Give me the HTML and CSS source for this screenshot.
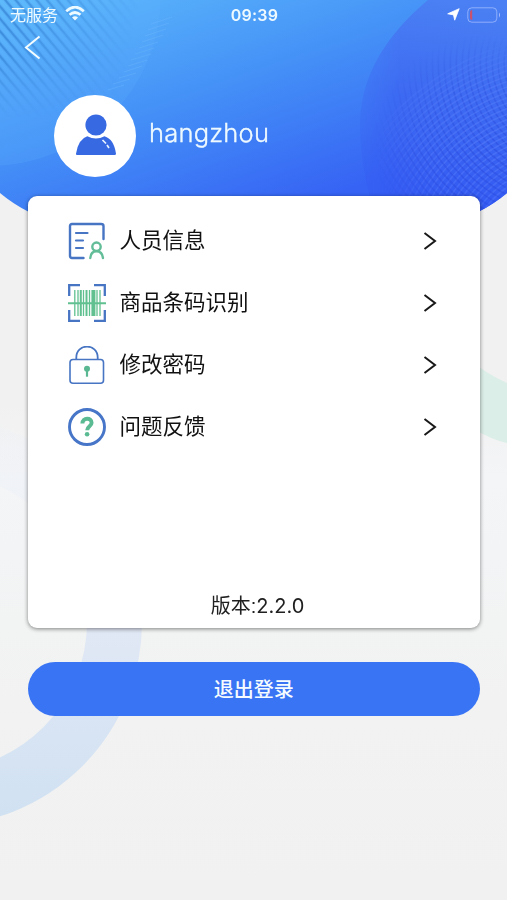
FILE: index.html
```html
<!DOCTYPE html>
<html lang="zh-CN">
<head>
<meta charset="utf-8">
<meta name="viewport" content="width=device-width">
<title>个人中心</title>
<link rel="stylesheet" href="styles.css">
</head>
<body>
<main class="screen">
<svg class="backdrop" viewBox="0 0 507 900" aria-hidden="true">
  <defs>
    <linearGradient id="sky" gradientUnits="userSpaceOnUse" x1="150" y1="-50" x2="250" y2="240">
      <stop offset="0" stop-color="#5ebbfb"/><stop offset=".5" stop-color="#4490f7"/><stop offset=".95" stop-color="#3663f4"/>
    </linearGradient>
    <linearGradient id="orb" gradientUnits="userSpaceOnUse" x1="430" y1="0" x2="410" y2="200">
      <stop offset="0" stop-color="#4a80f3"/><stop offset=".45" stop-color="#3e6bf2"/><stop offset="1" stop-color="#345af2"/>
    </linearGradient>
    <linearGradient id="ring" gradientUnits="userSpaceOnUse" x1="0" y1="430" x2="0" y2="820">
      <stop offset="0" stop-color="#e8eef7" stop-opacity=".15"/><stop offset=".2" stop-color="#e8eef7" stop-opacity=".4"/><stop offset=".5" stop-color="#e1e8f5"/><stop offset="1" stop-color="#d0e1f2"/>
    </linearGradient>
    <clipPath id="dome"><path d="M0 0H507V193Q494 204 478 212H29Q13 204 0 193Z"/></clipPath>
    <clipPath id="corner"><circle cx="-10" cy="-5" r="171"/></clipPath>
    <clipPath id="globe"><path d="M428 0Q360 57 360 125Q360 170 377 220H507V0Z"/></clipPath>
    <pattern id="waves" width="200" height="8" patternUnits="userSpaceOnUse" patternTransform="rotate(50)">
      <path d="M0 4H200" stroke="#2d77cd" stroke-width="2.6"/>
    </pattern>
    <linearGradient id="waveFade" gradientUnits="userSpaceOnUse" x1="0" y1="50" x2="125" y2="75"><stop stop-color="#fff" stop-opacity=".6"/><stop offset="1" stop-color="#fff" stop-opacity="0"/></linearGradient>
    <linearGradient id="waveDrop" x1="0" y1="0" x2="0" y2="1"><stop offset=".3" stop-color="#000" stop-opacity="0"/><stop offset=".65" stop-color="#000"/></linearGradient>
    <mask id="waveMask"><rect width="190" height="180" fill="url(#waveFade)"/><rect width="190" height="180" fill="url(#waveDrop)"/></mask>
    <linearGradient id="orbFade" gradientUnits="userSpaceOnUse" x1="358" y1="0" x2="400" y2="0"><stop stop-color="#fff" stop-opacity=".3"/><stop offset="1" stop-color="#fff"/></linearGradient>
    <mask id="orbMask"><rect x="350" width="157" height="220" fill="url(#orbFade)"/></mask>
    <radialGradient id="meshFade" gradientUnits="userSpaceOnUse" cx="484" cy="145" r="110"><stop stop-color="#fff"/><stop offset=".55" stop-color="#fff" stop-opacity=".75"/><stop offset="1" stop-color="#fff" stop-opacity="0"/></radialGradient>
    <mask id="meshMask"><rect x="350" width="157" height="220" fill="url(#meshFade)"/></mask>
  </defs>
  <circle cx="-62" cy="622" r="176.5" fill="none" stroke="url(#ring)" stroke-width="55"/>
  <path d="M470 360Q487 374 507 383V443Q492 440 470 427Z" fill="#dceee8"/>
  <g clip-path="url(#dome)">
    <rect width="507" height="220" fill="url(#sky)"/>
    <g clip-path="url(#corner)">
      <circle cx="-10" cy="-5" r="171" fill="#62baff" opacity=".17"/>
      <g mask="url(#waveMask)"><rect width="180" height="180" fill="url(#waves)"/></g>
    </g>
    <g stroke="#75bdff" stroke-width="1.3" opacity=".28" fill="none">
      <path d="M151 24L172 17M148 30L169 23M145 36L166 29M142 42L163 35M139 48L158 42M135 54L154 48M131 60L151 54M128 66L147 60M124 72L142 66M119 78L136 73M113 84L130 79M108 90L124 85"/>
    </g>
    <g clip-path="url(#globe)">
      <rect x="350" width="157" height="220" fill="url(#orb)" mask="url(#orbMask)"/>
      <g mask="url(#meshMask)" id="mesh" fill="none" stroke-width="1.6"></g>
    </g>
  </g>
</svg>

<header class="top">
  <div class="status">
    <div class="carrier"><span>无服务</span>
      <svg width="20" height="15" viewBox="0 0 20 15"><g fill="none" stroke="#edfaff" stroke-width="2.7"><path d="M1.2 5.2Q10-3 18.8 5.2"/><path d="M4.5 8.8Q10 4.2 15.5 8.8"/></g><path d="M7 11.4Q10 9 13 11.4L10 14.5Z" fill="#edfaff"/></svg>
    </div>
    <time>09:39</time>
    <div class="power">
      <svg width="13" height="13" viewBox="0 0 13 13"><path d="M12.2.7L7.7 12.2 6.5 6.9.7 5.8Z" fill="#fff" stroke="#fff" stroke-width=".8" stroke-linejoin="round"/></svg>
      <svg width="34" height="16" viewBox="0 0 34 16"><rect x=".8" y=".8" width="29" height="14.4" rx="4" fill="none" stroke="#a7bfff" stroke-opacity=".75"/><path d="M5.2 3Q3 3 3 5V11Q3 13 5.2 13Z" fill="#c9526f"/><path d="M32 5.5Q34 8 32 10.5Z" fill="#a7bfff"/></svg>
    </div>
  </div>
  <svg class="back" width="17" height="25" viewBox="0 0 17 25"><path d="M15.5 1.5L2 12.5 15.5 23.5" fill="none" stroke="#f4fcff" stroke-width="2"/></svg>
  <div class="profile">
    <div class="avatar"><svg width="42" height="42" viewBox="0 0 42 42" fill="#3769e3"><circle cx="21" cy="11" r="10.6"/><path d="M12.3 22.2Q21 27 29.5 22.2Q39 25 41 39.8Q41 41 39.5 41H2Q.8 41 1 39.8Q3.2 25 12.3 22.2Z"/><path d="M27.5 26L31 29.5M32 31L34 34" fill="none" stroke="#e9f3ff" stroke-width="1.7"/></svg></div>
    <span class="name">hangzhou</span>
  </div>
</header>

<section class="card">
  <nav class="menu">
    <a class="row"><svg class="icon" viewBox="0 0 38 38" fill="none" stroke-linecap="round" stroke-linejoin="round"><path d="M15.5 36H4Q2 36 2 34V4Q2 2 4 2H33Q35.5 2 35.5 4V17" stroke="#4775c3" stroke-width="2.4"/><path d="M8 11H19.5M8 18.5H15M8 26H15" stroke="#4775c3" stroke-width="2.2"/><g stroke="#62bd98" stroke-width="2.4"><circle cx="28.5" cy="24.7" r="4.2"/><path d="M22.3 36Q22.8 29.2 28.5 29.2T35 36"/></g></svg><span>人员信息</span><svg class="arrow" viewBox="0 0 14 20"><path d="M1.5 2L12 10 1.5 18"/></svg></a>
    <a class="row"><svg class="icon" viewBox="0 0 38 38" fill="none"><path d="M12 1.2H1.2V12M26 1.2H36.8V12M1.2 26V36.8H12M36.8 26V36.8H26" stroke="#4775c3" stroke-width="2.3"/><g stroke="#61c090"><path d="M6.8 6V32M10 6V32M15.5 6V32M21.5 6V32M29 6V32M32 6V32" stroke-width="1.3"/><path d="M12.8 6V32M18.5 6V32" stroke-width="2"/><path d="M25.4 6V32" stroke-width="4"/><path d="M0 19.2H38" stroke-width="2"/></g></svg><span>商品条码识别</span><svg class="arrow" viewBox="0 0 14 20"><path d="M1.5 2L12 10 1.5 18"/></svg></a>
    <a class="row"><svg class="icon" viewBox="0 0 38 38" fill="none"><rect x="2" y="13.5" width="33.5" height="23.7" rx="3" stroke="#4775c3" stroke-width="1.6"/><path d="M8.3 13V11.5C8.3-3 29.7-3 29.7 11.5V13" stroke="#4775c3" stroke-width="1.8"/><circle cx="19" cy="22.7" r="3" fill="#59b791"/><path d="M19 23V30.7" stroke="#59b791" stroke-width="2.2"/></svg><span>修改密码</span><svg class="arrow" viewBox="0 0 14 20"><path d="M1.5 2L12 10 1.5 18"/></svg></a>
    <a class="row"><svg class="icon" viewBox="0 0 38 38" fill="none"><circle cx="19" cy="19" r="17.5" stroke="#4776c8" stroke-width="2.9"/><path d="M14.4 15.5C14.4 9 23.9 9.3 23.6 14.8C23.5 18.5 19.3 18 19.2 22.2" stroke="#5abb93" stroke-width="4"/><circle cx="19.1" cy="26.2" r="2.3" fill="#5abb93"/></svg><span>问题反馈</span><svg class="arrow" viewBox="0 0 14 20"><path d="M1.5 2L12 10 1.5 18"/></svg></a>
  </nav>
  <p class="version"><span>版本:</span><span class="number">2.2.0</span></p>
</section>
<button class="logout" type="button">退出登录</button>
</main>
<script src="mesh.js"></script>
</body>
</html>
```
FILE: styles.css
```css
*{box-sizing:border-box}
body{margin:0;background:#f1f1f1;font-family:"Liberation Sans","Noto Sans CJK SC",sans-serif}
.screen{position:relative;width:507px;height:900px;overflow:hidden;background:linear-gradient(#f1f1f1 0,#f1f1f1 45%,#f4f5f7 53%,#f1f2f1 78%,#f1f1f1)}
.backdrop{position:absolute;inset:0;width:100%;height:100%}
.top{position:relative;height:196px;color:#effaff}
.status{display:grid;grid-template-columns:1fr 60px 1fr;align-items:center;height:29px;padding:0 6px 0 8px}
.carrier,.power{display:flex;align-items:center}
.carrier{gap:7px;font-size:16px;line-height:28px;padding-left:2px}
.carrier span{position:relative;top:1px}
.carrier svg{margin-top:-2px}
time{text-align:center;font:600 16px/28px Inter,sans-serif;letter-spacing:.2px}
.power{justify-content:flex-end;gap:7px}
.back{display:block;margin:6px 0 0 24px}
.profile{display:flex;align-items:center;margin:34.5px 0 0 54px;gap:13px}
.avatar{display:grid;place-items:center;width:82px;height:82px;border-radius:50%;background:#fff}
.avatar svg{margin-top:-2px;margin-left:2px}
.name{font:300 25.5px/36px Inter,sans-serif;letter-spacing:.22px;margin-top:-6px;-webkit-text-stroke:.35px #effaff}
.card{position:relative;display:flex;flex-direction:column;justify-content:space-between;width:452.5px;height:432px;margin-left:27.5px;padding:14px 43.5px 6px 40px;border-radius:9px;background:#fff;box-shadow:0 1px 4px rgba(0,0,0,.48)}
.row{display:flex;align-items:center;height:62px;color:#111;font-size:21.5px;line-height:32px}
.icon{width:38px;height:38px;margin-right:14px;flex:none}
.arrow{width:14px;height:20px;margin-left:auto;flex:none;fill:none;stroke:#181818;stroke-width:2}
.version{display:flex;justify-content:center;margin:0 0 0 11px;color:#202020;font-size:20px;line-height:32px}
.number{font-family:Inter,"Liberation Sans",sans-serif;font-size:20px}
.logout{position:relative;display:block;width:452.5px;height:54px;margin:33.5px 0 0 27.5px;padding:0;border:0;border-radius:27px;background:#3974f4;color:#f5fbff;font:500 20px/54px "Noto Sans CJK SC",sans-serif}
```
FILE: mesh.js
```javascript
const mesh = document.getElementById("mesh");
function arc(cx, cy, rx, ry, angle, color) {
  const e = document.createElementNS("http://www.w3.org/2000/svg", "ellipse");
  Object.entries({ cx, cy, rx, ry, stroke: color, transform: `rotate(${angle} ${cx} ${cy})` })
    .forEach(([key, value]) => e.setAttribute(key, value));
  mesh.appendChild(e);
}
for (let i = 0; i < 35; i++) {
  arc(540, 235, 24 + i * 6, 18 + i * 5, -35, "rgba(101,137,255,.38)");
  arc(575, 68, 30 + i * 6, 24 + i * 6, 28, "rgba(35,65,211,.36)");
}
```
